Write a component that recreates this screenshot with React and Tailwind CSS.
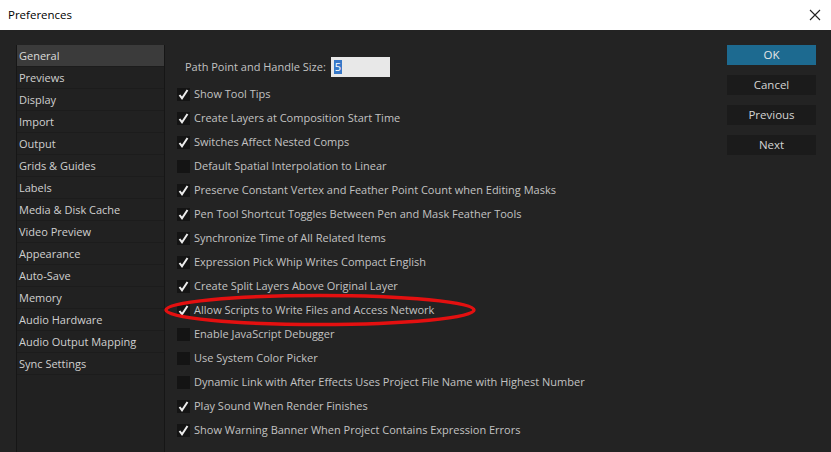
import React from "react";

const sections = [
  "General",
  "Previews",
  "Display",
  "Import",
  "Output",
  "Grids & Guides",
  "Labels",
  "Media & Disk Cache",
  "Video Preview",
  "Appearance",
  "Auto-Save",
  "Memory",
  "Audio Hardware",
  "Audio Output Mapping",
  "Sync Settings",
];

const options = [
  ["Show Tool Tips", true],
  ["Create Layers at Composition Start Time", true],
  ["Switches Affect Nested Comps", true],
  ["Default Spatial Interpolation to Linear", false],
  ["Preserve Constant Vertex and Feather Point Count when Editing Masks", true],
  ["Pen Tool Shortcut Toggles Between Pen and Mask Feather Tools", true],
  ["Synchronize Time of All Related Items", true],
  ["Expression Pick Whip Writes Compact English", true],
  ["Create Split Layers Above Original Layer", true],
  ["Allow Scripts to Write Files and Access Network", true],
  ["Enable JavaScript Debugger", false],
  ["Use System Color Picker", false],
  ["Dynamic Link with After Effects Uses Project File Name with Highest Number", false],
  ["Play Sound When Render Finishes", true],
  ["Show Warning Banner When Project Contains Expression Errors", true],
];

const Check = ({ on }) => (
  <div className="w-[13px] h-[13px] bg-[#141414] flex items-center justify-center shrink-0">
    {on && (
      <svg width="11" height="11" viewBox="0 0 11 11">
        <path d="M1.5 6 L4 9.2 L9.5 1" fill="none" stroke="#ececec" strokeWidth="2" />
      </svg>
    )}
  </div>
);

const Button = ({ children, primary }) => (
  <div
    className={
      "h-[20px] flex items-center justify-center text-[11.5px] " +
      (primary ? "bg-[#1d6a90] text-[#e6e6e6]" : "bg-[#1b1b1b] text-[#d4d4d4]")
    }
  >
    {children}
  </div>
);

export default function App() {
  return (
    <div
      className="w-[831px] h-[452px] overflow-hidden flex flex-col bg-[#232323]"
      style={{ fontFamily: '"Open Sans", "Noto Sans", sans-serif' }}
    >
      <div className="h-[30px] bg-white flex items-center justify-between pl-[8px] pr-[10px] text-[11.5px] text-black">
        <span>Preferences</span>
        <svg width="12" height="12" viewBox="0 0 12 12">
          <path d="M1 1 L11 11 M11 1 L1 11" stroke="#222" strokeWidth="1.1" />
        </svg>
      </div>
      <div className="flex-1 flex pt-[15px] pl-[16px] relative">
        <div className="w-[149px] border-l border-r border-[#161616] bg-[#212121] flex flex-col">
          {sections.map((s, i) => (
            <div
              key={s}
              className={
                "h-[22px] flex items-center pl-[2px] pt-[2px] text-[11px] border-b border-[#1c1c1c] " +
                (i === 0 ? "bg-[#3b3b3b] text-[#dcdcdc]" : "text-[#d0d0d0]")
              }
            >
              {s}
            </div>
          ))}
        </div>
        <div className="flex-1 flex flex-col pl-[12px] text-[11px] text-[#c2c2c2]">
          <div className="flex items-center h-[20px] mt-[12px] pl-[8px]">
            <span>Path Point and Handle Size:</span>
            <div className="ml-[5px] w-[59px] h-[20px] bg-[#e8e8e8] flex items-center pl-[3px]">
              <span className="bg-[#3778c8] text-white leading-[14px] px-[1px]">5</span>
            </div>
          </div>
          <div className="flex flex-col mt-[5px]">
            {options.map(([label, on]) => (
              <div key={label} className="h-[24px] flex items-center gap-[4px]">
                <Check on={on} />
                <span className="whitespace-nowrap">{label}</span>
              </div>
            ))}
          </div>
        </div>
        <div className="w-[89px] mr-[15px] flex flex-col gap-[10px]">
          <Button primary>OK</Button>
          <Button>Cancel</Button>
          <Button>Previous</Button>
          <Button>Next</Button>
        </div>
        <svg
          className="absolute left-[162px] top-[262px] pointer-events-none"
          width="316"
          height="36"
          viewBox="0 0 316 36"
        >
          <ellipse cx="158" cy="18" rx="154" ry="14.5" fill="none" stroke="#e41010" strokeWidth="3.5" />
        </svg>
      </div>
    </div>
  );
}
